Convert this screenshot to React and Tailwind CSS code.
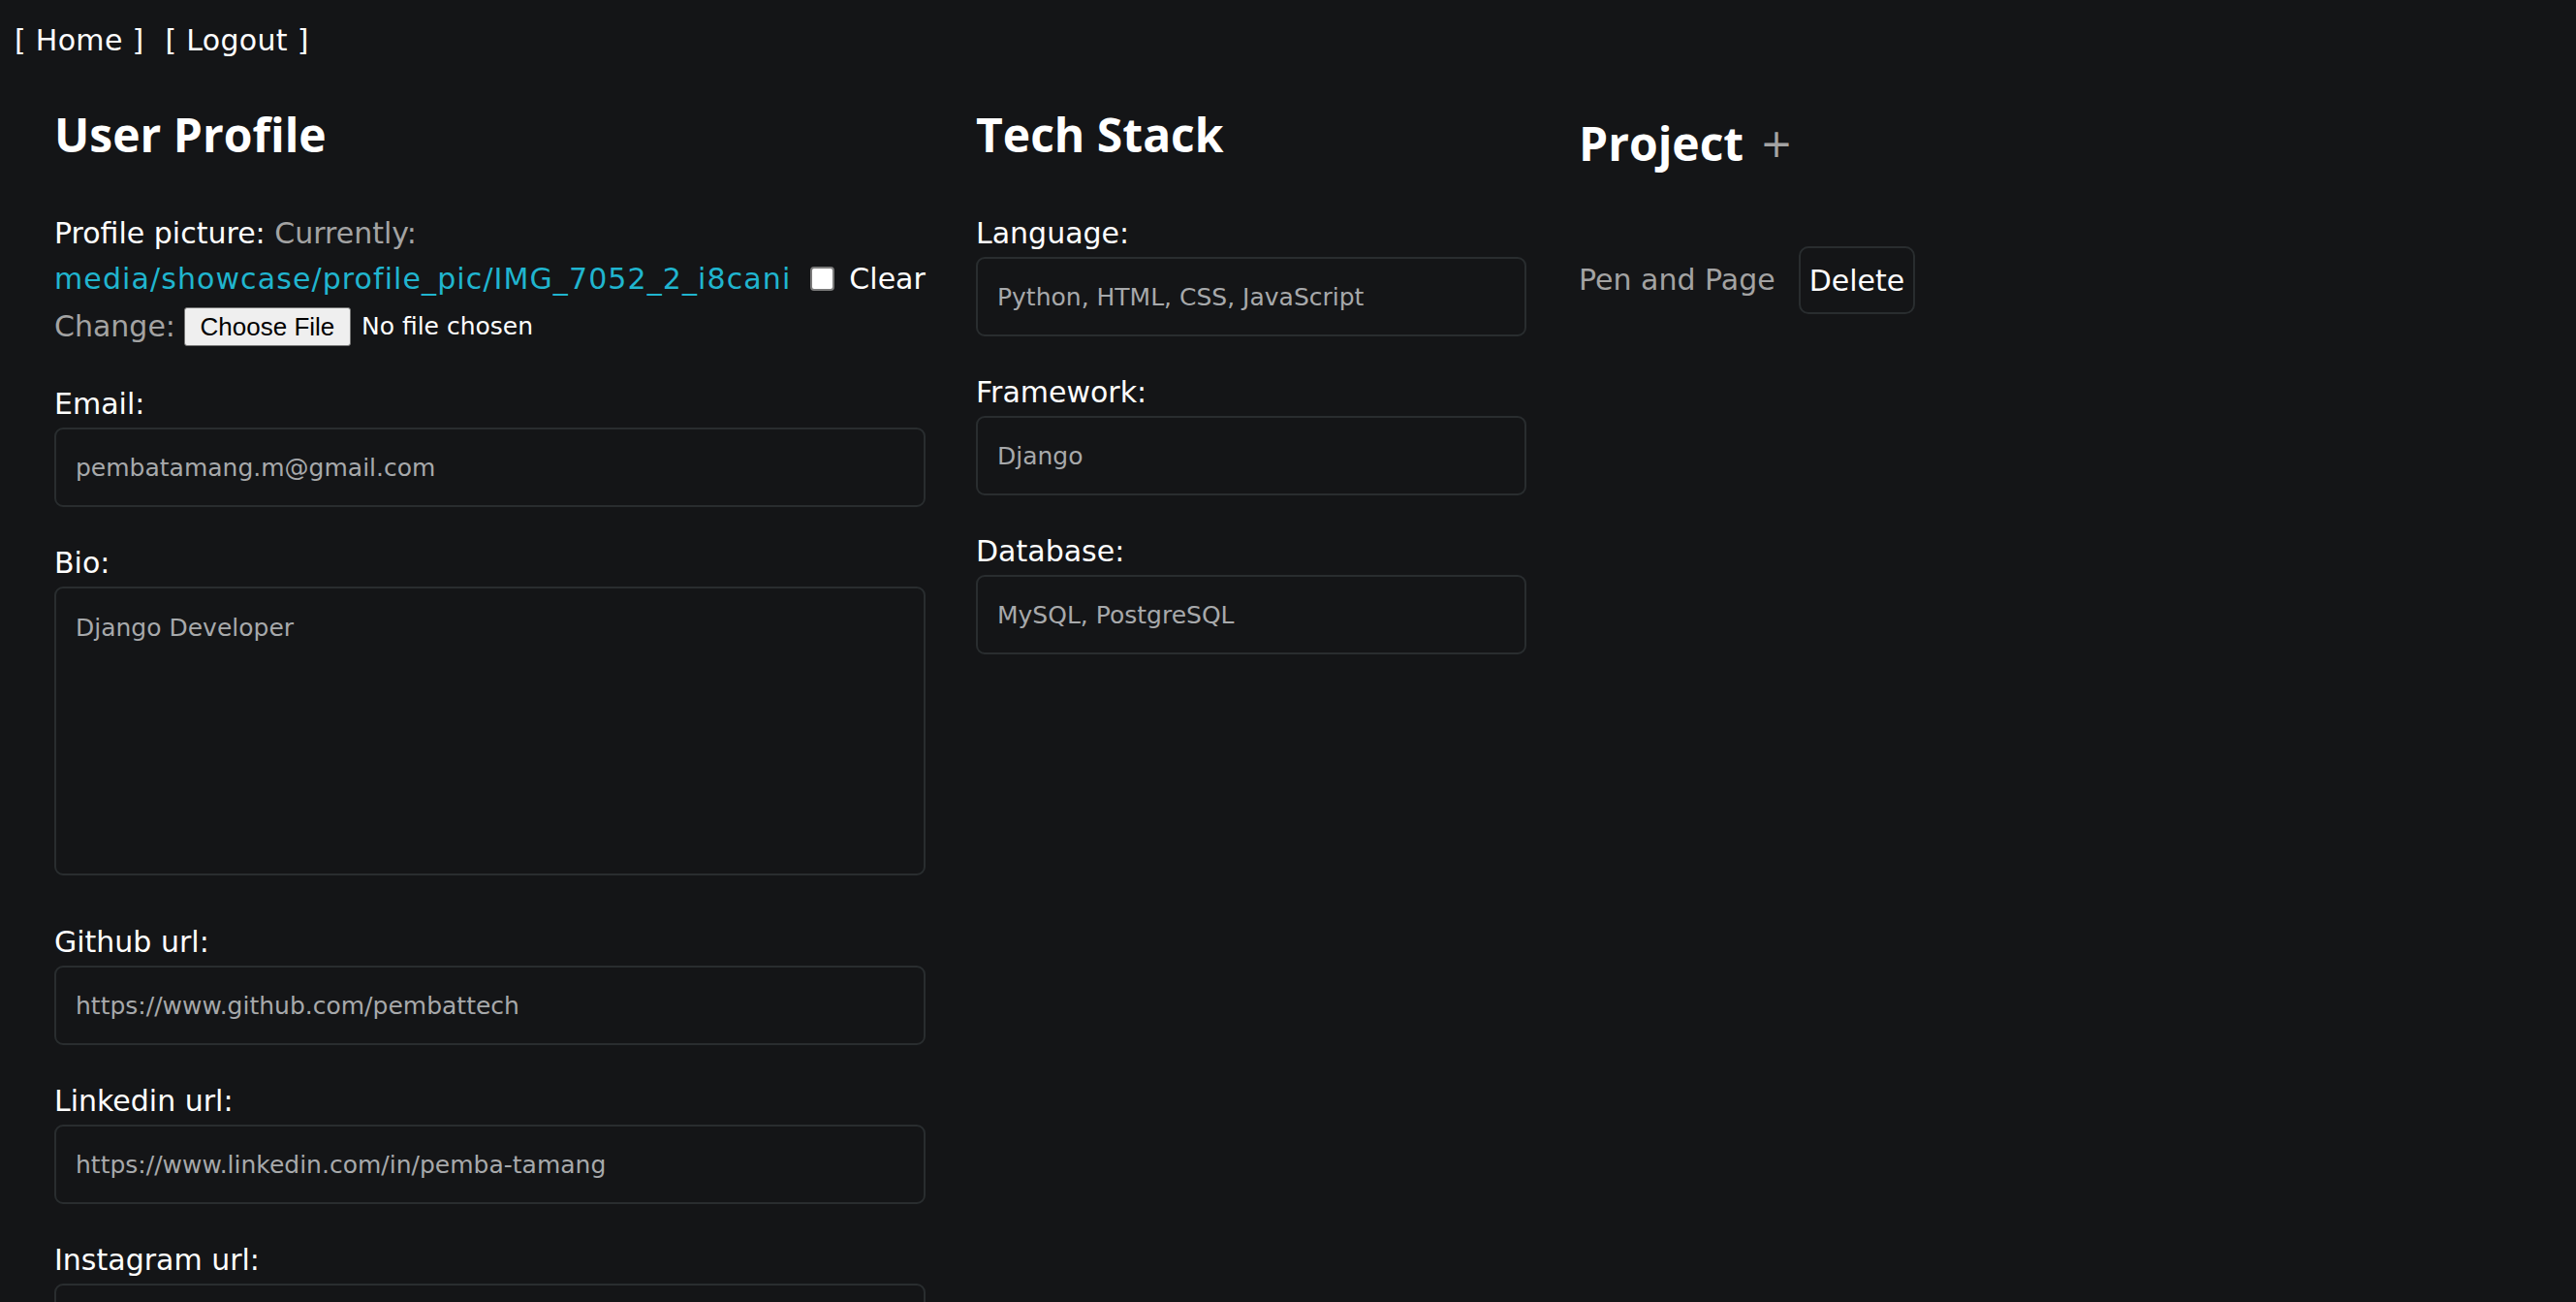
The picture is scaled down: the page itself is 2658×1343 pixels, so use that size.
import React from 'react';

const inputCls =
  "block w-full h-[82px] mt-[6px] px-[20px] bg-[#141517] border-2 border-[#292d2f] rounded-[9px] text-[25px] text-[#a7a9ab] font-['DejaVu_Sans',sans-serif] outline-none";

const Field = ({ label, value, last }) => (
  <div className={last ? '' : 'mb-[40px]'}>
    <label className="block text-[30px] leading-[36px] text-white">{label}</label>
    <input type="text" defaultValue={value} className={inputCls} />
  </div>
);

const App = () => {
  return (
    <div className="min-h-screen bg-[#141517] text-white font-['DejaVu_Sans',sans-serif]">
      {/* Top nav */}
      <nav className="flex gap-[22px] pl-[15px] pt-[24px] text-[30px] leading-[36px] tracking-[0.3px]">
        <a href="#" className="text-white">[ Home ]</a>
        <a href="#" className="text-white">[ Logout ]</a>
      </nav>

      <div className="flex pl-[56px] mt-[50px]">
        {/* User profile */}
        <div className="w-[899px] shrink-0">
          <h2 className="font-['Open_Sans',sans-serif] font-bold text-[48px] leading-[58px] mb-[55px]">User Profile</h2>

          <div className="mb-[37px]">
            <div className="text-[30px] leading-[36px]">
              <span className="text-white">Profile picture:</span>{' '}
              <span className="text-[#a3a3a3]">Currently:</span>
            </div>
            <div className="flex items-center h-[36px] mt-[10px] text-[30px]">
              <a href="#" className="text-[#20b5cf] whitespace-nowrap tracking-[1.1px]">media/showcase/profile_pic/IMG_7052_2_i8cani</a>
              <input
                type="checkbox"
                className="appearance-none w-[25px] h-[25px] m-0 ml-[20px] shrink-0 bg-white border-2 border-[#7a7a7a] rounded-[4px]"
              />
              <span className="ml-[15px] text-white">Clear</span>
            </div>
            <div className="flex items-center h-[50px] mt-[7px]">
              <span className="text-[30px] leading-[36px] text-[#a3a3a3]">Change:</span>
              <button className="ml-[9px] w-[172px] h-[40px] bg-[#efefef] border border-[#767676] rounded-[3px] text-black text-[26px] font-['Liberation_Sans',Arial,sans-serif]">
                Choose File
              </button>
              <span className="ml-[11px] text-[25px] text-white">No file chosen</span>
            </div>
          </div>

          <Field label="Email:" value="pembatamang.m@gmail.com" />

          <div className="mb-[51px]">
            <label className="block text-[30px] leading-[36px] text-white">Bio:</label>
            <textarea
              defaultValue="Django Developer"
              className="block w-full h-[298px] mt-[6px] px-[20px] pt-[22px] bg-[#141517] border-2 border-[#292d2f] rounded-[9px] text-[25px] text-[#a7a9ab] font-['DejaVu_Sans',sans-serif] outline-none resize-none"
            />
          </div>

          <Field label="Github url:" value="https://www.github.com/pembattech" />
          <Field label="Linkedin url:" value="https://www.linkedin.com/in/pemba-tamang" />
          <Field label="Instagram url:" value="" last />
        </div>

        {/* Tech stack */}
        <div className="w-[568px] shrink-0 ml-[52px]">
          <h2 className="font-['Open_Sans',sans-serif] font-bold text-[48px] leading-[58px] mb-[55px]">Tech Stack</h2>
          <Field label="Language:" value="Python, HTML, CSS, JavaScript" />
          <Field label="Framework:" value="Django" />
          <Field label="Database:" value="MySQL, PostgreSQL" last />
        </div>

        {/* Projects */}
        <div className="ml-[54px]">
          <div className="flex items-center mt-[9px]">
            <h2 className="font-['Open_Sans',sans-serif] font-bold text-[48px] leading-[58px]">Project</h2>
            <a href="#" className="ml-[17px] text-[40px] leading-none text-[#a3a3a3]">+</a>
          </div>
          <div className="flex items-center mt-[77px]">
            <span className="text-[30px] leading-[36px] text-[#a3a3a3]">Pen and Page</span>
            <button className="ml-[24px] h-[70px] px-[9px] border-2 border-[#292d2f] rounded-[10px] text-[30px] text-white">
              Delete
            </button>
          </div>
        </div>
      </div>
    </div>
  );
};

export default App;
